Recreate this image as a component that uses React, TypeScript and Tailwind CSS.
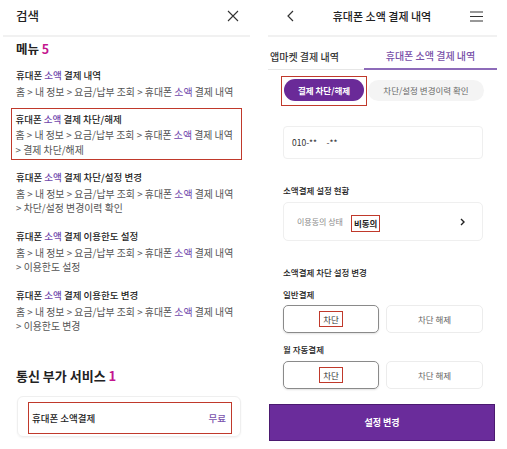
import React from 'react';

const FONT = { fontFamily: '"Noto Sans CJK KR", "Noto Sans", sans-serif' };

type MenuItem = { title: string; path: string[] };

const menuItems: MenuItem[] = [
  { title: '결제 내역', path: [] },
  { title: '결제 차단/해제', path: ['> 결제 차단/해제'] },
  { title: '결제 차단/설정 변경', path: ['> 차단/설정 변경이력 확인'] },
  { title: '결제 이용한도 설정', path: ['> 이용한도 설정'] },
  { title: '결제 이용한도 변경', path: ['> 이용한도 변경'] },
];

function Hl({ children }: { children: React.ReactNode }) {
  return <span className="text-[#7048ad]">{children}</span>;
}

function MenuEntry({ item }: { item: MenuItem }) {
  return (
    <div>
      <div className="text-[9.5px] leading-[16px] font-medium text-[#222] whitespace-nowrap">
        휴대폰 <Hl>소액</Hl> {item.title}
      </div>
      <div className="mt-[1.5px] text-[9.9px] leading-[14.5px] text-[#555] whitespace-nowrap">
        <div>
          홈 &gt; 내 정보 &gt; 요금/납부 조회 &gt; 휴대폰 <Hl>소액</Hl> 결제 내역
        </div>
        {item.path.map((p) => (
          <div key={p}>{p}</div>
        ))}
      </div>
    </div>
  );
}

function ToggleRow() {
  return (
    <div className="ml-[15px] flex gap-[7px]">
      <div className="w-[96px] h-[28px] rounded-[5px] border border-[#8a8a8a] shadow-[0_1px_2px_rgba(0,0,0,0.12)] flex items-center justify-center">
        <span className="border-[1.5px] border-[#c0392b] px-[3px] text-[8.5px] leading-[14px] text-[#333]">차단</span>
      </div>
      <div className="w-[97px] h-[28px] rounded-[5px] border border-[#ececec] flex items-center justify-center text-[8.5px] text-[#666]">
        차단 해제
      </div>
    </div>
  );
}

export default function App() {
  return (
    <div className="w-[507px] h-[449px] bg-white flex overflow-hidden" style={FONT}>
      {/* Left: search */}
      <div className="ml-[3px] w-[247px] shrink-0">
        <div className="h-[37px] px-[13px] pb-[3px] flex items-center justify-between border-b-2 border-[#f1f1f1]">
          <span className="text-[12.5px] font-medium text-[#222]">검색</span>
          <svg width="12" height="12" viewBox="0 0 12 12" className="mr-[-2px]">
            <path d="M1 1L11 11M11 1L1 11" stroke="#333" strokeWidth="1.1" fill="none" />
          </svg>
        </div>
        <div className="px-[13px]">
          <div className="mt-[2.5px] text-[12.5px] leading-[18px] font-bold text-[#222]">
            메뉴 <span className="text-[#c4168f]">5</span>
          </div>

          <div className="mt-[9.5px]">
            <MenuEntry item={menuItems[0]} />
          </div>
          <div className="mt-[9px] -mx-[5px] px-[3.5px] pt-[1.5px] pb-[2px] border-[1.5px] border-[#c0392b]">
            <MenuEntry item={menuItems[1]} />
          </div>
          <div className="mt-[9px]">
            <MenuEntry item={menuItems[2]} />
          </div>
          <div className="mt-[12.5px]">
            <MenuEntry item={menuItems[3]} />
          </div>
          <div className="mt-[12.5px]">
            <MenuEntry item={menuItems[4]} />
          </div>

          <div className="mt-[33.5px] text-[13px] leading-[18px] font-bold text-[#222]">
            통신 부가 서비스 <span className="text-[#c4168f]">1</span>
          </div>
          <div className="mt-[11px] ml-[1px] w-[224px] h-[41px] rounded-[6px] border border-[#efefef] shadow-[0_1px_2px_rgba(0,0,0,0.05)] pl-[10px] pr-[8px] pt-[5px]">
            <div className="h-[32px] border-[1.5px] border-[#c0392b] pl-[3px] pr-[5px] flex items-center justify-between">
              <span className="text-[9.5px] font-medium text-[#222]">휴대폰 소액결제</span>
              <span className="text-[9.5px] font-medium text-[#7a52ad]">무료</span>
            </div>
          </div>
        </div>
      </div>

      {/* Right: 휴대폰 소액 결제 내역 */}
      <div className="ml-[18px] w-[229px] shrink-0">
        <div className="h-[37px] pb-[3px] flex items-center justify-between border-b-2 border-[#f1f1f1] pl-[19px] pr-[14px]">
          <svg width="7" height="12" viewBox="0 0 7 12">
            <path d="M6 1L1 6L6 11" stroke="#333" strokeWidth="1.2" fill="none" />
          </svg>
          <span className="text-[11px] font-medium text-[#222]">휴대폰 소액 결제 내역</span>
          <svg width="13" height="11" viewBox="0 0 13 11">
            <path d="M0 1H13M0 5.5H13M0 10H13" stroke="#333" strokeWidth="1.1" fill="none" />
          </svg>
        </div>

        <div className="flex h-[33px]">
          <div className="w-[96px] pt-[6px] pl-[2px] flex items-center border-b-[1.5px] border-[#e6e6e6] text-[10px] font-medium text-[#333]">
            앱마켓 결제 내역
          </div>
          <div className="flex-1 pt-[6px] flex items-center justify-center border-b-2 border-[#8d6bb9] text-[10px] font-medium text-[#7850a8]">
            휴대폰 소액 결제 내역
          </div>
        </div>

        <div className="mt-[6px] ml-[13px] flex items-start">
          <div className="border-[1.5px] border-[#c0392b] p-[2px] pb-[4px]">
            <div className="w-[80px] h-[22px] rounded-full bg-[#6a2a98] flex items-center justify-center text-[8.5px] font-bold text-white">
              결제 차단/해제
            </div>
          </div>
          <div className="ml-[1px] mt-[4px] w-[116px] h-[21px] rounded-full bg-[#f4f4f4] flex items-center justify-center text-[8.5px] text-[#666]">
            차단/설정 변경이력 확인
          </div>
        </div>

        <div className="mt-[20px] ml-[15px] w-[200px] h-[33px] rounded-[4px] border border-[#efefef] px-[8px] flex items-center text-[8.5px] text-[#333] whitespace-pre">
          010-**     -**
        </div>

        <div className="mt-[24px] ml-[15px] text-[8.5px] leading-[14px] font-medium text-[#222]">소액결제 설정 현황</div>
        <div className="mt-[5px] ml-[15px] w-[200px] h-[39px] rounded-[5px] border border-[#efefef] pl-[13px] pr-[17px] flex items-center">
          <span className="text-[8px] text-[#8a8a8a]">이용동의 상태</span>
          <span className="ml-[8px] mt-[3px] border-[1.5px] border-[#c0392b] px-[2px] text-[8.5px] leading-[15px] font-bold text-[#222]">비동의</span>
          <svg width="5" height="8" viewBox="0 0 5 8" className="ml-auto">
            <path d="M1 1L4 4L1 7" stroke="#222" strokeWidth="1.4" fill="none" />
          </svg>
        </div>

        <div className="mt-[24px] ml-[15px] text-[8.5px] leading-[14px] font-medium text-[#222]">소액결제 차단 설정 변경</div>
        <div className="mt-[8px] ml-[15px] text-[8.5px] leading-[14px] font-medium text-[#222]">일반결제</div>
        <div className="mt-[4px]">
          <ToggleRow />
        </div>
        <div className="mt-[9px] ml-[15px] text-[8.5px] leading-[14px] font-medium text-[#222]">월 자동결제</div>
        <div className="mt-[5px]">
          <ToggleRow />
        </div>

        <div className="mt-[15px] ml-[1px] w-[226px] h-[37px] bg-[#6a2c9b] border border-[#4b1a70] flex items-center justify-center text-[9px] font-bold text-white">
          설정 변경
        </div>
      </div>
    </div>
  );
}
